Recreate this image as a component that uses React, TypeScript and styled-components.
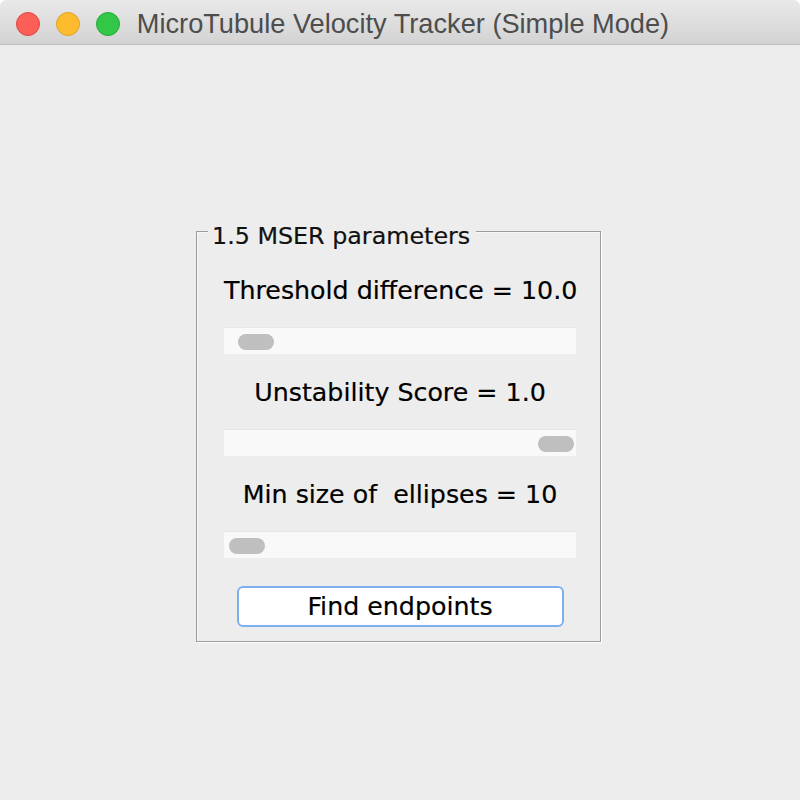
import React from "react";
import styled, { createGlobalStyle } from "styled-components";

const GlobalStyle = createGlobalStyle`
  html, body {
    margin: 0;
    padding: 0;
    background: #ffffff;
  }
  * { box-sizing: border-box; }
`;

const Window = styled.div`
  width: 800px;
  height: 800px;
  display: flex;
  flex-direction: column;
  background: #ededed;
  border-radius: 6px 6px 0 0;
  overflow: hidden;
`;

const TitleBar = styled.div`
  height: 45px;
  padding-top: 4px;
  display: grid;
  grid-template-columns: 1fr auto 1fr;
  align-items: center;
  background: linear-gradient(#e9e9e9, #d3d3d3);
  border-bottom: 1px solid #bdbdbd;
  border-radius: 6px 6px 0 0;
`;

const Lights = styled.div`
  display: flex;
  gap: 16px;
  padding-left: 16px;
  align-items: center;
`;

const Light = styled.span<{ $fill: string; $edge: string }>`
  width: 24px;
  height: 24px;
  border-radius: 50%;
  background: ${(p) => p.$fill};
  border: 1px solid ${(p) => p.$edge};
`;

const Title = styled.div`
  font-family: "Liberation Sans", Arial, sans-serif;
  font-size: 27.2px;
  line-height: 40px;
  color: #4d4d4d;
  white-space: nowrap;
  padding-left: 6px;
`;

const Content = styled.div`
  flex: 1;
  display: flex;
  flex-direction: column;
  align-items: flex-start;
  padding: 186px 0 0 196px;
`;

const Panel = styled.section`
  position: relative;
  width: 405px;
  height: 411px;
  border: 1px solid #9c9c9c;
  box-shadow: 1px 1px 0 #ffffff, inset 1px 1px 0 #f7f7f7;
  padding: 39px 24px 14px 27px;
  display: flex;
  flex-direction: column;
  align-items: center;
  gap: 19px;
  font-family: "DejaVu Sans", "Lucida Grande", sans-serif;
  -webkit-text-stroke: 0.2px currentColor;
`;

const Legend = styled.span`
  position: absolute;
  top: -10px;
  left: 11px;
  padding: 0 6px 0 4px;
  background: #ededed;
  font-size: 23.8px;
  line-height: 28px;
  color: #111;
  white-space: nowrap;
`;

const Group = styled.div`
  width: 352px;
  display: flex;
  flex-direction: column;
  gap: 16px;
`;

const Label = styled.div`
  height: 40px;
  line-height: 40px;
  text-align: center;
  font-size: 25.3px;
  color: #000;
  white-space: pre;
`;

const Track = styled.div`
  height: 27px;
  display: flex;
  align-items: flex-start;
  padding-top: 6px;
  background: #f9f9f9;
  border-top: 1px solid #e6e6e6;
`;

const Thumb = styled.span<{ $offset: number }>`
  width: 36px;
  height: 16px;
  margin-left: ${(p) => p.$offset}px;
  border-radius: 8px;
  background: #bfbfbf;
`;

const Button = styled.button`
  margin-top: 9px;
  width: 327px;
  height: 41px;
  background: #ffffff;
  border: 2px solid #7eaff0;
  border-radius: 6px;
  font-family: "DejaVu Sans", "Lucida Grande", sans-serif;
  font-size: 25.3px;
  color: #000;
  padding: 0;
  line-height: 1;
  -webkit-text-stroke: 0.2px currentColor;
`;

const sliders = [
  { label: "Threshold difference = 10.0", offset: 14 },
  { label: "Unstability Score = 1.0", offset: 314 },
  { label: "Min size of  ellipses = 10", offset: 5 },
];

export default function App() {
  return (
    <>
      <GlobalStyle />
      <Window>
        <TitleBar>
          <Lights>
            <Light $fill="#fc5f57" $edge="#de4640" />
            <Light $fill="#fdbc2e" $edge="#dea12a" />
            <Light $fill="#33c748" $edge="#25a936" />
          </Lights>
          <Title>MicroTubule Velocity Tracker (Simple Mode)</Title>
          <div />
        </TitleBar>
        <Content>
          <Panel>
            <Legend>1.5 MSER parameters</Legend>
            {sliders.map((s) => (
              <Group key={s.label}>
                <Label>{s.label}</Label>
                <Track>
                  <Thumb $offset={s.offset} />
                </Track>
              </Group>
            ))}
            <Button>Find endpoints</Button>
          </Panel>
        </Content>
      </Window>
    </>
  );
}
